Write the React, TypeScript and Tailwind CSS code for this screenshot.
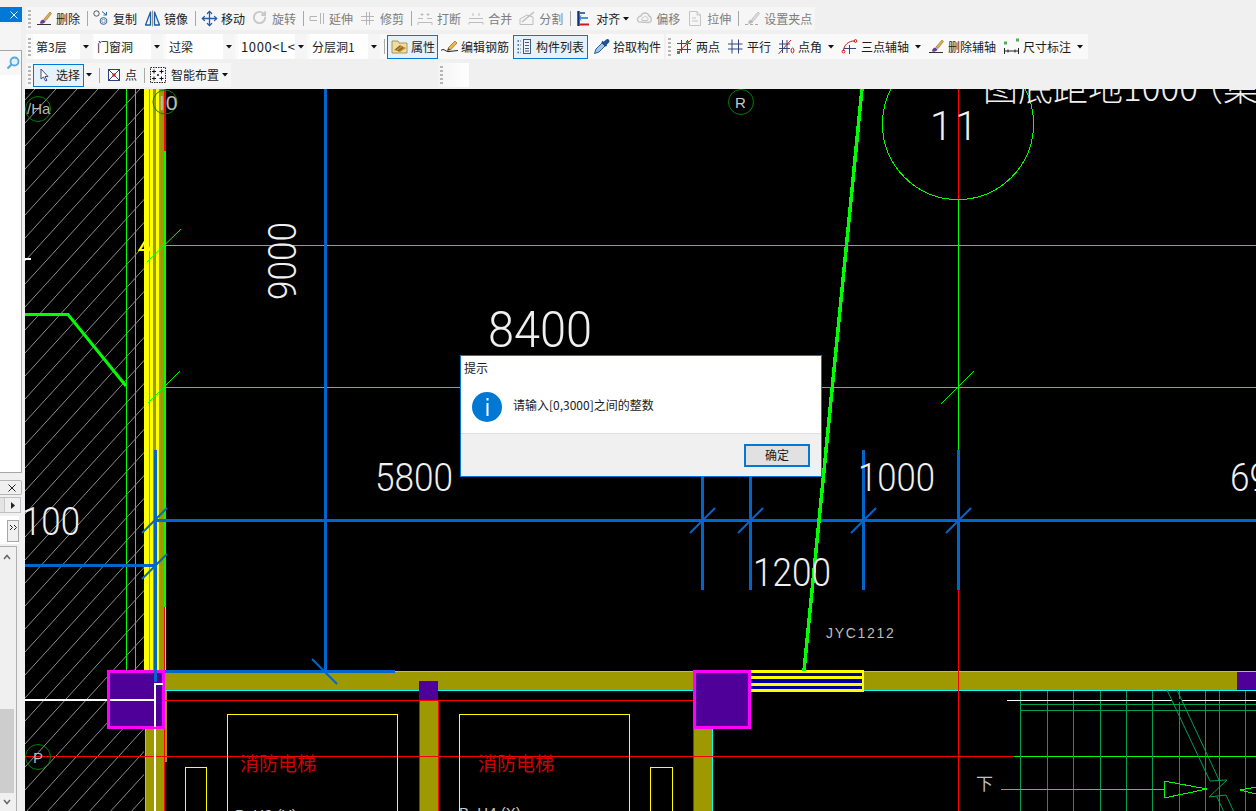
import React from "react";
import { Move, RotateCw } from "lucide-react";

const Ico = ({ children }: { children: React.ReactNode }) => (
  <svg width="17" height="17" viewBox="0 0 17 17" className="shrink-0" fill="none">
    {children}
  </svg>
);

const Grip = () => (
  <div className="flex flex-col gap-[2px] ml-[2px] w-[3px] shrink-0">
    <div className="w-[3px] h-[2px] bg-[#b5b5b5]" />
    <div className="w-[3px] h-[2px] bg-[#b5b5b5]" />
    <div className="w-[3px] h-[2px] bg-[#b5b5b5]" />
    <div className="w-[3px] h-[2px] bg-[#b5b5b5]" />
    <div className="w-[3px] h-[2px] bg-[#b5b5b5]" />
  </div>
);

const Sep = ({ className = "ml-[7px]" }: { className?: string }) => (
  <div className={`w-px h-[15px] bg-[#a8a8a8] shrink-0 ${className}`} />
);

const Caret = ({ className = "" }: { className?: string }) => (
  <svg width="6" height="4" viewBox="0 0 6 4" className={`shrink-0 ${className}`}>
    <path d="M0 0H6L3 3.5Z" fill="#111" />
  </svg>
);

const Tool = ({
  icon,
  text,
  className = "ml-[7px]",
  off = false,
}: {
  icon: React.ReactNode;
  text: string;
  className?: string;
  off?: boolean;
}) => (
  <div className={`flex items-center gap-[3px] shrink-0 text-xs leading-none whitespace-nowrap ${off ? "text-[#7d7d7d]" : "text-[#1c1c1c]"} ${className}`}>
    {icon}
    <span>{text}</span>
  </div>
);

const Combo = ({ text, className, textClass = "" }: { text: string; className: string; textClass?: string }) => (
  <div className={`flex h-[25px] bg-white shrink-0 text-xs leading-none text-[#1c1c1c] ${className}`}>
    <div className={`flex-1 flex items-center pl-[3px] whitespace-nowrap overflow-hidden ${textClass}`}>{text}</div>
    <div className="w-[12px] bg-[#f5f5f5] flex items-center justify-center">
      <Caret />
    </div>
  </div>
);

const Brush = ({ gray = false }: { gray?: boolean }) => (
  <Ico>
    <path d="M1 14.5H15" stroke={gray ? "#aaa" : "#333"} strokeWidth="1" strokeDasharray={gray ? "3 2" : undefined} />
    <path d="M4 13.5C4 11 6 9.5 7.5 9.5L9.5 11.5C9 13 7 14 4 13.5Z" fill={gray ? "#bbb" : "#6a3f8f"} />
    <path d="M8 9L14 2L15.5 3.5L10 10.5Z" fill={gray ? "#ddd" : "#e0b050"} stroke={gray ? "#aaa" : "#8a6a2a"} strokeWidth="0.6" />
  </Ico>
);

const IconCopy = () => (
  <Ico>
    <circle cx="3.5" cy="3.5" r="2.7" stroke="#555" />
    <circle cx="10.5" cy="11" r="3.4" stroke="#2a6aa8" />
    <circle cx="10.5" cy="11" r="1.8" stroke="#777" strokeWidth="0.7" />
    <path d="M9 1.5L13.5 5M13.5 2V5H10.5" stroke="#2a6aa8" />
  </Ico>
);
const IconMirror = () => (
  <Ico>
    <path d="M6.5 2V15H1.5Z" stroke="#1f5ea8" strokeWidth="1.3" strokeLinejoin="round" />
    <path d="M10.5 2V15H15.5Z" stroke="#1f5ea8" strokeWidth="1.3" strokeLinejoin="round" />
    <path d="M8.5 0.5V16.5" stroke="#777" strokeWidth="0.8" />
  </Ico>
);
const IconExtend = () => (
  <Ico>
    <path d="M1 6.5H8M1 10.5H8M1 6.5V10.5M11.5 3V14M14.5 3V14" stroke="#b5b5b5" />
  </Ico>
);
const IconTrim = () => (
  <Ico>
    <path d="M1 6.5H14M1 10.5H14M6.5 2V15M9.5 2V15" stroke="#b5b5b5" />
  </Ico>
);
const IconBreak = () => (
  <Ico>
    <path d="M1 8.5H6M10 8.5H15M1 12.5H15M1 12.5V15M15 12.5V15M5 3V6M11 3V6M3.5 4.5H6.5M9.5 4.5H12.5" stroke="#bdbdbd" />
  </Ico>
);
const IconMerge = () => (
  <Ico>
    <path d="M1 8.5H15M1 12.5H15M1 12.5V14.5M15 12.5V14.5M5 3V6M11 3V6" stroke="#bdbdbd" />
  </Ico>
);
const IconSplit = () => (
  <Ico>
    <path d="M1 14.5H14V7L8 5L1 9Z" stroke="#bdbdbd" />
    <path d="M3 12L15 2" stroke="#bdbdbd" strokeWidth="1.5" />
  </Ico>
);
const IconAlign = () => (
  <Ico>
    <path d="M2.5 1V16" stroke="#0c2f7a" strokeWidth="2.4" />
    <path d="M3 8H12" stroke="#0c6ac0" strokeWidth="1.4" />
    <path d="M5 5.5L3 8L5 10.5" stroke="#0c6ac0" />
    <path d="M4 14.5H13" stroke="#c02020" strokeWidth="2" />
    <path d="M4 3H9" stroke="#0c2f7a" strokeWidth="1.4" />
  </Ico>
);
const IconOffset = () => (
  <Ico>
    <path d="M3 12C0 10 2 6 5 6C6 2 12 2 13 6C16 7 16 12 13 12.5Z" stroke="#c4c4c4" strokeWidth="1.4" />
    <path d="M6 10.5C5 8.5 6.5 7.5 7.5 7.5C8.5 5.5 11 6 11 8C12.5 8 12.5 10.5 11 10.5Z" stroke="#c4c4c4" />
  </Ico>
);
const IconStretch = () => (
  <Ico>
    <path d="M2.5 1.5H10L13.5 5V15.5H2.5Z" stroke="#c4c4c4" />
    <path d="M10 1.5V5H13.5M5 8H9M5 11H11" stroke="#c4c4c4" />
  </Ico>
);
const IconRebar = () => (
  <Ico>
    <path d="M0 12.5C3 9.5 5 14.5 8 13.5L17 12.5" stroke="#222" />
    <path d="M7 10L14 3L16 5L9.5 12Z" fill="#e8b84c" stroke="#9a6a1a" strokeWidth="0.7" />
    <path d="M7 10L6 13L9.5 12Z" fill="#444" />
  </Ico>
);
const IconAttr = () => (
  <Ico>
    <path d="M1 3H7L8 5H16V15H1Z" fill="#f1dca3" stroke="#9b8040" strokeWidth="0.8" />
    <path d="M3 12L9 7L15 10L9 14Z" fill="#b88a30" />
    <path d="M4.5 11.5L9 8M7 13L12 9.5" stroke="#5b4310" strokeWidth="0.7" />
  </Ico>
);
const IconList = () => (
  <Ico>
    <rect x="7.5" y="1.5" width="7" height="14" stroke="#465a78" fill="#eef3f9" />
    <path d="M9 4.5H13M9 7.5H13M9 10.5H13M9 13H13" stroke="#465a78" />
    <path d="M1.5 3H4.5M1.5 7H4.5M1.5 11H4.5M1.5 14.5H4.5" stroke="#465a78" strokeWidth="1.6" strokeDasharray="1.5 1" />
  </Ico>
);
const IconPick = () => (
  <Ico>
    <path d="M1.5 15.5L3 11L9 5L12 8L6 14Z" fill="#9fc6ea" stroke="#2a5f9e" />
    <path d="M9 3.5L13.5 8M11 5L13.5 2.5C15 1.5 16 3 15 4L12.5 6.5" stroke="#1f4f8a" strokeWidth="2" />
  </Ico>
);
const IconTwo = () => (
  <Ico>
    <path d="M5.5 2V15M11.5 2V15M1 5.5H15M1 11.5H15" stroke="#33477f" />
    <path d="M1.5 15L16 1" stroke="#d01818" />
    <rect x="1" y="13" width="3" height="3" fill="#4d8f2f" />
    <rect x="10" y="3" width="3" height="3" fill="#4d8f2f" />
  </Ico>
);
const IconParallel = () => (
  <Ico>
    <path d="M5 1.5V15.5M11.5 1.5V15.5M1 6H15.5M1 11H15.5" stroke="#33477f" />
  </Ico>
);
const IconAngle = () => (
  <Ico>
    <path d="M4.5 2V15M9 2V15M1 6H12M1 10.5H12" stroke="#33477f" />
    <path d="M0.5 16L13 2" stroke="#d01818" />
    <ellipse cx="14.5" cy="12.5" rx="1.4" ry="2.4" stroke="#d01818" />
  </Ico>
);
const IconArc = () => (
  <Ico>
    <path d="M8.5 7V16M3 10.5H15" stroke="#33477f" />
    <path d="M2.5 13C2.5 7 8 2.5 14 3" stroke="#c81818" />
    <circle cx="2.5" cy="13.5" r="1.4" stroke="#c81818" />
    <circle cx="14.5" cy="3" r="1.4" stroke="#c81818" />
  </Ico>
);
const IconDim = () => (
  <Ico>
    <rect x="1" y="3.5" width="3" height="3" fill="#53ad5f" />
    <rect x="13" y="0.5" width="3" height="3" fill="#53ad5f" />
    <path d="M1.5 10V16M15.5 10V16M1.5 13H15.5" stroke="#222" />
    <path d="M5 11.5V14.5M12 11.5V14.5" stroke="#222" />
  </Ico>
);
const IconCursor = () => (
  <svg width="9" height="14" viewBox="0 0 9 14" className="shrink-0">
    <path d="M1 1V11L3.5 9L5.5 13L7 12.3L5 8.5H8Z" fill="#fff" stroke="#3f4f7f" />
  </svg>
);
const IconPoint = () => (
  <svg width="12" height="12" viewBox="0 0 12 12" className="shrink-0">
    <rect x="0.5" y="0.5" width="11" height="11" fill="#fff" stroke="#2c3f8f" />
    <path d="M1 1L11 11M11 1L1 11" stroke="#2c3f8f" />
    <rect x="4.5" y="4.5" width="3" height="3" fill="#d01818" />
  </svg>
);
const IconSmart = () => (
  <svg width="16" height="16" viewBox="0 0 16 16" className="shrink-0">
    <rect x="0.5" y="0.5" width="15" height="15" fill="#f8f8f8" stroke="#222" strokeDasharray="1.5 1" />
    <path d="M4 2.5V6.5M2 4.5H6M11.5 2.5V6.5M9.5 4.5H13.5M4 9.5V13.5M2 11.5H6M11.5 9.5V13.5M9.5 11.5H13.5" stroke="#111" />
    <rect x="7" y="7" width="2" height="2" fill="#2b5fb0" />
  </svg>
);

const LeftPanel = () => (
  <aside className="w-[25px] shrink-0 h-full flex flex-col bg-[#f0f0f0]">
    <div className="h-[7px]" />
    <div className="h-[15px] w-[22px] bg-[#0078d7] flex items-center justify-end pr-[4px]">
      <svg width="8" height="8" viewBox="0 0 8 8">
        <path d="M0.5 0.5L7.5 7.5M7.5 0.5L0.5 7.5" stroke="#fff" />
      </svg>
    </div>
    <div className="mt-[2px] h-[26px] w-[21px] bg-[#f5f5f5]" />
    <div className="h-[25px] w-[22px] bg-[#f7f7f7] border-t border-r border-[#a6a6a6] flex items-center justify-end pr-[1px]">
      <svg width="14" height="14" viewBox="0 0 14 14">
        <circle cx="8.5" cy="5.5" r="4" fill="#e4f1fb" stroke="#5aa6dd" strokeWidth="1.8" />
        <path d="M5.5 8.5L1.5 12.5" stroke="#5aa6dd" strokeWidth="2.2" />
      </svg>
    </div>
    <div className="h-[398px] w-[22px] bg-white border-r border-b border-[#a6a6a6]" />
    <div className="mt-[7px] h-[15px] w-[22px] bg-[#f0f0f0] border border-l-0 border-[#b5b5b5] rounded-r-[2px] flex items-center justify-end pr-[5px]">
      <svg width="8" height="8" viewBox="0 0 8 8">
        <path d="M0.5 0.5L7.5 7.5M7.5 0.5L0.5 7.5" stroke="#222" />
      </svg>
    </div>
    <div className="mt-[2px] h-[16px] w-[21px] flex justify-end bg-[#e4e4e4] border border-l-0 border-[#c0c0c0]">
      <div className="w-[16px] bg-[#f0f0f0] flex items-center justify-center border-l border-[#c8c8c8]">
        <svg width="4" height="7" viewBox="0 0 4 7">
          <path d="M0 0L4 3.5L0 7Z" fill="#222" />
        </svg>
      </div>
    </div>
    <div className="mt-[3px] h-[28px] w-[19px] bg-white flex justify-end items-start pt-[4px]">
      <div className="w-[12px] h-[22px] bg-[#f0f0f0] border border-[#a6a6a6] flex justify-center pt-[3px]">
        <svg width="9" height="7" viewBox="0 0 9 7" fill="none">
          <path d="M1 1L3.5 3.5L1 6M5 1L7.5 3.5L5 6" stroke="#222" />
        </svg>
      </div>
    </div>
    <div className="mt-[2px] flex-1 w-[17px] bg-[#f0f0f0] border-r border-t border-[#b0b0b0] flex flex-col">
      <div className="h-[20px] flex items-center justify-center pr-[3px]">
        <svg width="8" height="6" viewBox="0 0 8 6" fill="none">
          <path d="M1 5L4 1.5L7 5" stroke="#666" strokeWidth="1.5" />
        </svg>
      </div>
      <div className="h-[142px]" />
      <div className="h-[84px] w-[14px] bg-[#cdcdcd]" />
      <div className="flex-1 flex items-center justify-center pr-[3px]">
        <svg width="8" height="6" viewBox="0 0 8 6" fill="none">
          <path d="M1 1L4 4.5L7 1" stroke="#666" strokeWidth="1.5" />
        </svg>
      </div>
    </div>
  </aside>
);

const Toolbars = () => (
  <div className="h-[89px] shrink-0 bg-[#f0f0f0]">
    <div className="pt-[7px] flex">
      <div className="ml-px h-[23px] w-[789px] bg-[#f6f6f6] flex items-center">
        <Grip />
        <Tool className="ml-[5px]" icon={<Brush />} text="删除" />
        <Sep />
        <Tool className="ml-[5px]" icon={<IconCopy />} text="复制" />
        <Tool icon={<IconMirror />} text="镜像" />
        <Sep />
        <Tool className="ml-[5px]" icon={<Ico><Move size={17} color="#1f5ea8" strokeWidth={1.8} /></Ico>} text="移动" />
        <Tool off icon={<Ico><RotateCw size={15} color="#c8c8c8" strokeWidth={3} /></Ico>} text="旋转" />
        <Sep />
        <Tool off className="ml-[5px]" icon={<IconExtend />} text="延伸" />
        <Tool off icon={<IconTrim />} text="修剪" />
        <Sep />
        <Tool off className="ml-[5px]" icon={<IconBreak />} text="打断" />
        <Tool off icon={<IconMerge />} text="合并" />
        <Tool off icon={<IconSplit />} text="分割" />
        <Sep />
        <Tool className="ml-[5px]" icon={<IconAlign />} text="对齐" />
        <Caret className="ml-[3px]" />
        <Tool off icon={<IconOffset />} text="偏移" />
        <Tool off icon={<IconStretch />} text="拉伸" />
        <Sep />
        <Tool off className="ml-[5px]" icon={<Brush gray />} text="设置夹点" />
      </div>
    </div>
    <div className="mt-[4px] flex">
      <div className="ml-px h-[25px] w-[638px] bg-[#f9f9f9] flex items-center">
        <Grip />
        <Combo className="ml-[2px] w-[59px]" text="第3层" />
        <Combo className="ml-[2px] w-[69px]" text="门窗洞" />
        <Combo className="ml-[3px] w-[69px]" text="过梁" />
        <Combo className="ml-[3px] w-[69px]" textClass="text-[13px] tracking-[0.6px]" text="1000<L<" />
        <Combo className="ml-[3px] w-[70px]" textClass="-ml-px" text="分层洞1" />
        <Sep className="ml-[4px]" />
        <div className="ml-[2px] w-[51px] h-[24px] border border-[#0078d7] bg-[#e5f1fb] flex items-center pl-[3px] shrink-0">
          <Tool className="" icon={<IconAttr />} text="属性" />
        </div>
        <Tool className="ml-[3px]" icon={<IconRebar />} text="编辑钢筋" />
        <div className="ml-[4px] w-[75px] h-[24px] border border-[#0078d7] bg-[#e5f1fb] flex items-center pl-[2px] shrink-0">
          <Tool className="" icon={<IconList />} text="构件列表" />
        </div>
        <Tool className="ml-[5px]" icon={<IconPick />} text="拾取构件" />
      </div>
      <div className="ml-[2px] h-[25px] w-[422px] bg-[#f9f9f9] flex items-center">
        <Grip />
        <Tool className="ml-[5px]" icon={<IconTwo />} text="两点" />
        <Tool icon={<IconParallel />} text="平行" />
        <Tool icon={<IconAngle />} text="点角" />
        <Caret className="ml-[6px]" />
        <Tool icon={<IconArc />} text="三点辅轴" />
        <Caret className="ml-[6px]" />
        <Tool icon={<Brush />} text="删除辅轴" />
        <Tool icon={<IconDim />} text="尺寸标注" />
        <Caret className="ml-[6px]" />
      </div>
    </div>
    <div className="mt-[4px] flex">
      <div className="ml-px h-[24px] w-[205px] bg-[#f6f6f6] flex items-center text-xs leading-none text-[#1c1c1c] whitespace-nowrap">
        <Grip />
        <div className="ml-[2px] w-[51px] h-[23px] border border-[#0078d7] bg-[#e5f1fb] flex items-center pl-[6px] shrink-0">
          <IconCursor />
          <span className="ml-[7px]">选择</span>
        </div>
        <Caret className="ml-[2px]" />
        <Sep className="ml-[7px]" />
        <div className="ml-[8px] shrink-0"><IconPoint /></div>
        <span className="ml-[5px]">点</span>
        <Sep className="ml-[7px]" />
        <div className="ml-[5px] shrink-0"><IconSmart /></div>
        <span className="ml-[5px]">智能布置</span>
        <Caret className="ml-[3px]" />
      </div>
      <div className="ml-[207px] h-[24px] w-[31px] bg-gradient-to-r from-[#f4f4f4] to-[#ffffff] flex items-center">
        <Grip />
      </div>
    </div>
  </div>
);

const hatchLines = Array.from({ length: 40 }, (_, i) => 100 + i * 23);
const GREEN = "#00ff00";
const BLUE = "#0066cc";
const RED = "#ff0000";
const OLIVE = "#9e9900";
const CYAN = "#00ffff";
const PURPLE = "#4e0099";
const MAGENTA = "#ff00ff";
const YELLOW = "#ffff00";
const STAIR = "#00a050";

const CadLine = ({ x1, y1, x2, y2, c, w = 1 }: { x1: number; y1: number; x2: number; y2: number; c: string; w?: number }) => (
  <line x1={x1} y1={y1} x2={x2} y2={y2} stroke={c} strokeWidth={w} />
);

const Num = ({ x, y, size, len, children }: { x: number; y: number; size: number; len: number; children: string }) => (
  <text x={x} y={y} fontSize={size} textLength={len} lengthAdjust="spacingAndGlyphs" fontWeight="300" style={{ fontFamily: "Roboto,'Liberation Sans',sans-serif" }}>
    {children}
  </text>
);

const Drawing = () => (
  <svg viewBox="25 89 1231 722" width="1231" height="722" className="block absolute left-0 top-0" style={{ fontFamily: "'Liberation Sans','Noto Sans CJK SC',sans-serif" }}>
    <defs>
      <clipPath id="hatch">
        <rect x="25" y="89" width="119" height="722" />
      </clipPath>
    </defs>
    <rect x="25" y="89" width="1231" height="722" fill="#000" />
    <g clipPath="url(#hatch)" stroke="#8e8e8e" strokeWidth="1">
      {hatchLines.map((y) => (
        <line key={y} x1="25" y1={y} x2="150" y2={y - 137} />
      ))}
    </g>
    <g shapeRendering="crispEdges">
      <CadLine x1={126.5} y1={89} x2={126.5} y2={671} c={GREEN} />
      <CadLine x1={135.5} y1={89} x2={135.5} y2={671} c={GREEN} />
      <CadLine x1={165} y1={245.5} x2={1256} y2={245.5} c={GREEN} />
      <CadLine x1={165} y1={387.5} x2={1256} y2={387.5} c={GREEN} />

      {/* column stripes */}
      <rect x="144" y="89" width="21" height="582" fill={OLIVE} />
      <rect x="144" y="89" width="5" height="582" fill={YELLOW} />
      <rect x="150" y="89" width="3" height="582" fill={YELLOW} />
      <rect x="156" y="89" width="3" height="582" fill={YELLOW} />
      <rect x="164" y="151" width="2" height="456" fill={GREEN} />
      <rect x="164" y="89" width="2" height="62" fill={RED} />
      <rect x="164" y="607" width="1" height="64" fill={RED} />
      <rect x="165" y="607" width="1" height="64" fill={YELLOW} />

      {/* walls */}
      <rect x="165" y="672" width="528" height="18" fill={OLIVE} />
      <rect x="864" y="672" width="392" height="18" fill={OLIVE} />
      <CadLine x1={165} y1={671.5} x2={693} y2={671.5} c={CYAN} />
      <CadLine x1={165} y1={690.5} x2={693} y2={690.5} c={CYAN} />
      <CadLine x1={864} y1={671.5} x2={1256} y2={671.5} c={CYAN} />
      <CadLine x1={864} y1={690.5} x2={1256} y2={690.5} c={CYAN} />
      <rect x="1237" y="672" width="19" height="18" fill={PURPLE} />

      <rect x="145" y="729" width="19" height="82" fill={OLIVE} />
      <rect x="164" y="691" width="3" height="71" fill={OLIVE} />
      <CadLine x1={145.5} y1={729} x2={145.5} y2={811} c={CYAN} />
      <rect x="420" y="700" width="18" height="111" fill={OLIVE} />
      <rect x="419" y="681" width="19" height="19" fill={PURPLE} />
      <CadLine x1={419.5} y1={700} x2={419.5} y2={811} c={RED} />
      <CadLine x1={438.5} y1={700} x2={438.5} y2={811} c={RED} />
      <rect x="693" y="729" width="19" height="82" fill={OLIVE} />
      <CadLine x1={693.5} y1={700} x2={693.5} y2={811} c={RED} />
      <CadLine x1={712.5} y1={729} x2={712.5} y2={811} c={CYAN} />

      {/* axis through the wall */}
      <CadLine x1={958.5} y1={89} x2={958.5} y2={199} c={RED} />
      <CadLine x1={958.5} y1={199} x2={958.5} y2={450} c={GREEN} />
      <CadLine x1={958.5} y1={590} x2={958.5} y2={811} c={RED} />

      {/* red axes */}
      <CadLine x1={164} y1={700.5} x2={693} y2={700.5} c={RED} />
      <CadLine x1={164.5} y1={691} x2={164.5} y2={811} c={RED} />
      <CadLine x1={25} y1={756.5} x2={1014} y2={756.5} c={RED} />
      <CadLine x1={1014} y1={756.5} x2={1256} y2={756.5} c={GREEN} />

      {/* yellow rooms */}
      <rect x="227.5" y="714.5" width="170" height="110" fill="none" stroke={YELLOW} />
      <rect x="459.5" y="714.5" width="170" height="110" fill="none" stroke={YELLOW} />
      <rect x="185.5" y="767.5" width="21" height="60" fill="none" stroke={YELLOW} />
      <rect x="650.5" y="767.5" width="22" height="60" fill="none" stroke={YELLOW} />

      {/* white */}
      <rect x="25" y="699" width="130" height="2" fill="#fff" />
      <rect x="154" y="683" width="2" height="128" fill="#fff" />

      {/* columns */}
      <rect x="108.5" y="671.5" width="55" height="56" fill={PURPLE} stroke={MAGENTA} strokeWidth="3" />
      <rect x="694.5" y="671.5" width="55" height="56" fill={PURPLE} stroke={MAGENTA} strokeWidth="3" />
      <rect x="110" y="699" width="45" height="2" fill="#fff" />
      <rect x="154" y="683" width="2" height="44" fill="#fff" />
      <rect x="154" y="683" width="9" height="2" fill="#fff" />

      {/* window */}
      <rect x="751" y="670" width="113" height="22" fill={YELLOW} />
      <rect x="751" y="673" width="111" height="3" fill="#00009e" />
      <rect x="751" y="679" width="111" height="4" fill="#00009e" />
      <rect x="751" y="686" width="111" height="3" fill="#00009e" />

      {/* blue dims */}
      <CadLine x1={325} y1={89} x2={325} y2={672} c={BLUE} w={3} />
      <CadLine x1={155} y1={450} x2={155} y2={682} c={BLUE} w={3} />
      <CadLine x1={155} y1={520.5} x2={1256} y2={520.5} c={BLUE} w={3} />
      <CadLine x1={25} y1={565.5} x2={155} y2={565.5} c={BLUE} w={3} />
      <CadLine x1={165} y1={671.5} x2={395} y2={671.5} c={BLUE} w={3} />
      <CadLine x1={702.5} y1={476} x2={702.5} y2={590} c={BLUE} w={3} />
      <CadLine x1={750.5} y1={476} x2={750.5} y2={590} c={BLUE} w={3} />
      <CadLine x1={863.5} y1={450} x2={863.5} y2={590} c={BLUE} w={3} />
      <CadLine x1={958.5} y1={450} x2={958.5} y2={590} c={BLUE} w={3} />
    </g>

    <g fill="none">
      <line x1="142" y1="533" x2="167" y2="508" stroke={BLUE} strokeWidth="2" />
      <line x1="142" y1="579" x2="167" y2="554" stroke={BLUE} strokeWidth="2" />
      <line x1="312" y1="659" x2="337" y2="684" stroke={BLUE} strokeWidth="2" />
      <line x1="690" y1="533" x2="715" y2="508" stroke={BLUE} strokeWidth="2" />
      <line x1="738" y1="533" x2="763" y2="508" stroke={BLUE} strokeWidth="2" />
      <line x1="851" y1="533" x2="876" y2="508" stroke={BLUE} strokeWidth="2" />
      <line x1="946" y1="533" x2="971" y2="508" stroke={BLUE} strokeWidth="2" />
      <line x1="147" y1="262" x2="181" y2="229" stroke={GREEN} />
      <line x1="148" y1="403" x2="180" y2="371" stroke={GREEN} />
      <line x1="941" y1="404" x2="974" y2="371" stroke={GREEN} />
      <circle cx="958" cy="124" r="75.5" stroke={GREEN} shapeRendering="crispEdges" />
      <line x1="862" y1="89" x2="804" y2="671" stroke={GREEN} strokeWidth="3.5" shapeRendering="crispEdges" />
      <polyline points="25,314.5 68,314.5 126,386" stroke={GREEN} strokeWidth="3" />
      <circle cx="741" cy="102" r="12.5" stroke="#008000" />
      <circle cx="38" cy="109" r="12.5" stroke="#008000" />
      <circle cx="165" cy="102" r="12" stroke="#008000" />
      <circle cx="38" cy="757" r="12.5" stroke="#008000" />
    </g>
    <path d="M145 241L150 250H139.5Z" fill="none" stroke={YELLOW} strokeWidth="2" />
    <rect x="25" y="258" width="6" height="2" fill="#fff" />

    {/* stairs */}
    <g stroke={STAIR} fill="none" shapeRendering="crispEdges">
      {[1020.5, 1047.5, 1073.5, 1100.5, 1126.5, 1152.5, 1179.5, 1205.5, 1219.5, 1245.5].map((x) => (
        <line key={x} x1={x} y1="691" x2={x} y2="811" />
      ))}
      <line x1="1020" y1="704.5" x2="1256" y2="704.5" />
      <line x1="1020" y1="710.5" x2="1256" y2="710.5" />
    </g>
    <rect x="1007" y="700" width="249" height="1" fill="#fff" />
    <rect x="1172" y="699" width="10" height="3" fill="#000" />
    <g fill="none" stroke={STAIR}>
      <path d="M1167 690L1210 781L1227 780L1209 797L1226 795L1240 825" />
      <path d="M1177 690L1219 780" />
      <path d="M1217 797L1230 825" />
    </g>
    <g shapeRendering="crispEdges" fill="none" stroke={GREEN}>
      <line x1="1001" y1="789.5" x2="1164" y2="789.5" />
      <line x1="1164.5" y1="781" x2="1164.5" y2="798" />
      <path d="M1164 781L1207 789L1164 798" />
      <path d="M1240 790L1256 787M1240 790L1256 794" />
    </g>

    {/* canvas text */}
    <g fill="#f0f0f0">
      <Num x={488} y={347} size={50} len={104}>8400</Num>
      <Num x={375} y={491} size={39} len={78}>5800</Num>
      <Num x={858} y={491} size={39} len={77}>1000</Num>
      <Num x={753} y={586} size={39} len={78}>1200</Num>
      <Num x={1230} y={491} size={39} len={39}>69</Num>
      <Num x={22} y={535} size={39} len={58}>100</Num>
      <text x="930" y="140" fontSize="40" letterSpacing="3" fontWeight="300" style={{ fontFamily: "Roboto,sans-serif" }}>11</text>
      <text transform="translate(296 300) rotate(-90)" fontSize="39" textLength="78" lengthAdjust="spacingAndGlyphs" fontWeight="300" style={{ fontFamily: "Roboto,sans-serif" }}>9000</text>
      <text x="983" y="101" fontSize="35" style={{ fontFamily: "'Noto Sans CJK SC',sans-serif" }} fontWeight="300">
        图底距地1000<tspan dx="-10">（集</tspan>
      </text>
    </g>
    <text x="826" y="638" fontSize="14" fill="#bdbdbd" letterSpacing="1.7">JYC1212</text>
    <text x="240" y="771" fontSize="19" fill="#d40000" style={{ fontFamily: "'Noto Sans CJK SC',sans-serif" }}>消防电梯</text>
    <text x="478" y="771" fontSize="19" fill="#d40000" style={{ fontFamily: "'Noto Sans CJK SC',sans-serif" }}>消防电梯</text>
    <text x="976" y="790" fontSize="17" fill="#c0c0c0" style={{ fontFamily: "'Noto Sans CJK SC',sans-serif" }}>下</text>
    <text x="735" y="108" fontSize="15" fill="#c8c8c8">R</text>
    <text x="33" y="763" fontSize="15" fill="#b8b8b8">P</text>
    <text x="27" y="114" fontSize="15" fill="#b8b8b8">/Ha</text>
    <text x="159" y="110" fontSize="21" fill="#bdbdbd" letterSpacing="1">I0</text>
    <text x="235" y="820" fontSize="15" fill="#c8c8c8">B_H2 (Y)</text>
    <text x="459" y="818" fontSize="15" fill="#c8c8c8">B_H4 (X)</text>
  </svg>
);

const Dialog = () => (
  <div className="absolute left-[435px] top-[266px] w-[362px] h-[122px] border border-[#0078d7] bg-white flex flex-col text-xs text-[#1a1a1a] leading-none">
    <div className="h-[25px] pl-[3px] pt-[6px]">提示</div>
    <div className="flex-1 flex items-start pl-[11px] pt-[11px]">
      <div className="w-[30px] h-[30px] rounded-full bg-[#0078d4] flex items-center justify-center shrink-0">
        <svg width="3" height="18" viewBox="0 0 3 18">
          <rect x="0.5" y="0" width="2" height="2.5" fill="#fff" />
          <rect x="0.5" y="5" width="2" height="13" fill="#fff" />
        </svg>
      </div>
      <span className="ml-[11px] mt-[7px] whitespace-nowrap">请输入[0,3000]之间的整数</span>
    </div>
    <div className="h-[43px] shrink-0 bg-[#f0f0f0] border-t border-[#dfdfdf] flex items-center justify-end pr-[11px]">
      <button className="w-[66px] h-[23px] border-2 border-[#0078d7] bg-[#e1e1e1] text-xs text-[#1a1a1a] leading-none">确定</button>
    </div>
  </div>
);

export default function App() {
  return (
    <div className="w-[1256px] h-[811px] overflow-hidden flex bg-[#f0f0f0] font-['Noto_Sans_CJK_SC','Liberation_Sans',sans-serif]">
      <LeftPanel />
      <main className="flex-1 min-w-0 flex flex-col">
        <Toolbars />
        <div className="relative flex-1 overflow-hidden bg-black">
          <Drawing />
          <Dialog />
        </div>
      </main>
    </div>
  );
}
